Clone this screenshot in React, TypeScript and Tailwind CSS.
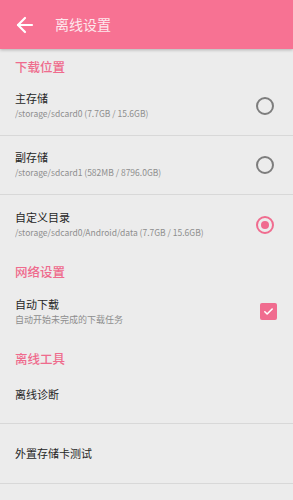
import { ArrowLeft } from 'lucide-react';

const FONT = { fontFamily: '"Noto Sans CJK SC", "Noto Sans", sans-serif' };

type StorageRow = { title: string; path: string; selected?: boolean; divider?: boolean };

const STORAGE: StorageRow[] = [
  { title: '主存储', path: '/storage/sdcard0 (7.7GB / 15.6GB)', divider: true },
  { title: '副存储', path: '/storage/sdcard1 (582MB / 8796.0GB)', divider: true },
  { title: '自定义目录', path: '/storage/sdcard0/Android/data (7.7GB / 15.6GB)', selected: true },
];

const Radio = ({ checked }: { checked?: boolean }) =>
  checked ? (
    <div className="w-[18px] h-[18px] rounded-full border-2 border-[#f06c8f] flex items-center justify-center">
      <div className="w-[8px] h-[8px] rounded-full bg-[#f06c8f]" />
    </div>
  ) : (
    <div className="w-[18px] h-[18px] rounded-full border-2 border-[#7d7d7d]" />
  );

const Section = ({ label, h }: { label: string; h: string }) => (
  <div className={`${h} pl-[15px] pt-[10px] text-[12.5px] leading-[16px] text-[#ef6b8d] font-medium`}>
    {label}
  </div>
);

export default function App() {
  return (
    <div className="w-[293px] h-[500px] bg-[#ececec] overflow-hidden" style={FONT}>
      {/* HEADER */}
      <div className="h-[49px] bg-[#f77293] flex items-center shadow-[0_1px_3px_rgba(0,0,0,0.25)] relative z-10">
        <ArrowLeft size={24} strokeWidth={2.2} className="ml-[13px] text-white" />
        <span className="ml-[18px] text-[14px] text-[#fde8ed]">离线设置</span>
      </div>

      <Section label="下载位置" h="h-[28px]" />
      {STORAGE.map(r => (
        <div
          key={r.title}
          className={`h-[59px] flex items-center pl-[15px] pr-[19px] ${r.divider ? 'border-b border-[#d8d8d8]' : ''}`}
        >
          <div className="flex-1 min-w-0 flex flex-col">
            <span className="text-[11px] leading-[15px] text-[#262626]">{r.title}</span>
            <span className="text-[8.5px] leading-[15px] text-[#8e8e8e] truncate">{r.path}</span>
          </div>
          <Radio checked={r.selected} />
        </div>
      ))}

      <Section label="网络设置" h="h-[28px]" />
      <div className="h-[59px] flex items-center pl-[15px] pr-[16px]">
        <div className="flex-1 flex flex-col">
          <span className="text-[11px] leading-[15px] text-[#262626]">自动下载</span>
          <span className="text-[9px] leading-[15px] text-[#8e8e8e]">自动开始未完成的下载任务</span>
        </div>
        <div className="w-[17px] h-[17px] rounded-[2px] bg-[#f06c8f] flex items-center justify-center">
          <svg width="11" height="11" viewBox="0 0 24 24" fill="none" stroke="white" strokeWidth="3.5" strokeLinecap="round" strokeLinejoin="round">
            <path d="M4 12.5l5 5L20 6.5" />
          </svg>
        </div>
      </div>

      <Section label="离线工具" h="h-[24px]" />
      <div className="h-[59px] flex items-center pl-[15px] border-b border-[#d8d8d8] text-[11px] text-[#262626]">
        离线诊断
      </div>
      <div className="h-[60px] flex items-center pl-[15px] border-b border-[#d8d8d8] text-[11px] text-[#262626]">
        外置存储卡测试
      </div>
    </div>
  );
}
